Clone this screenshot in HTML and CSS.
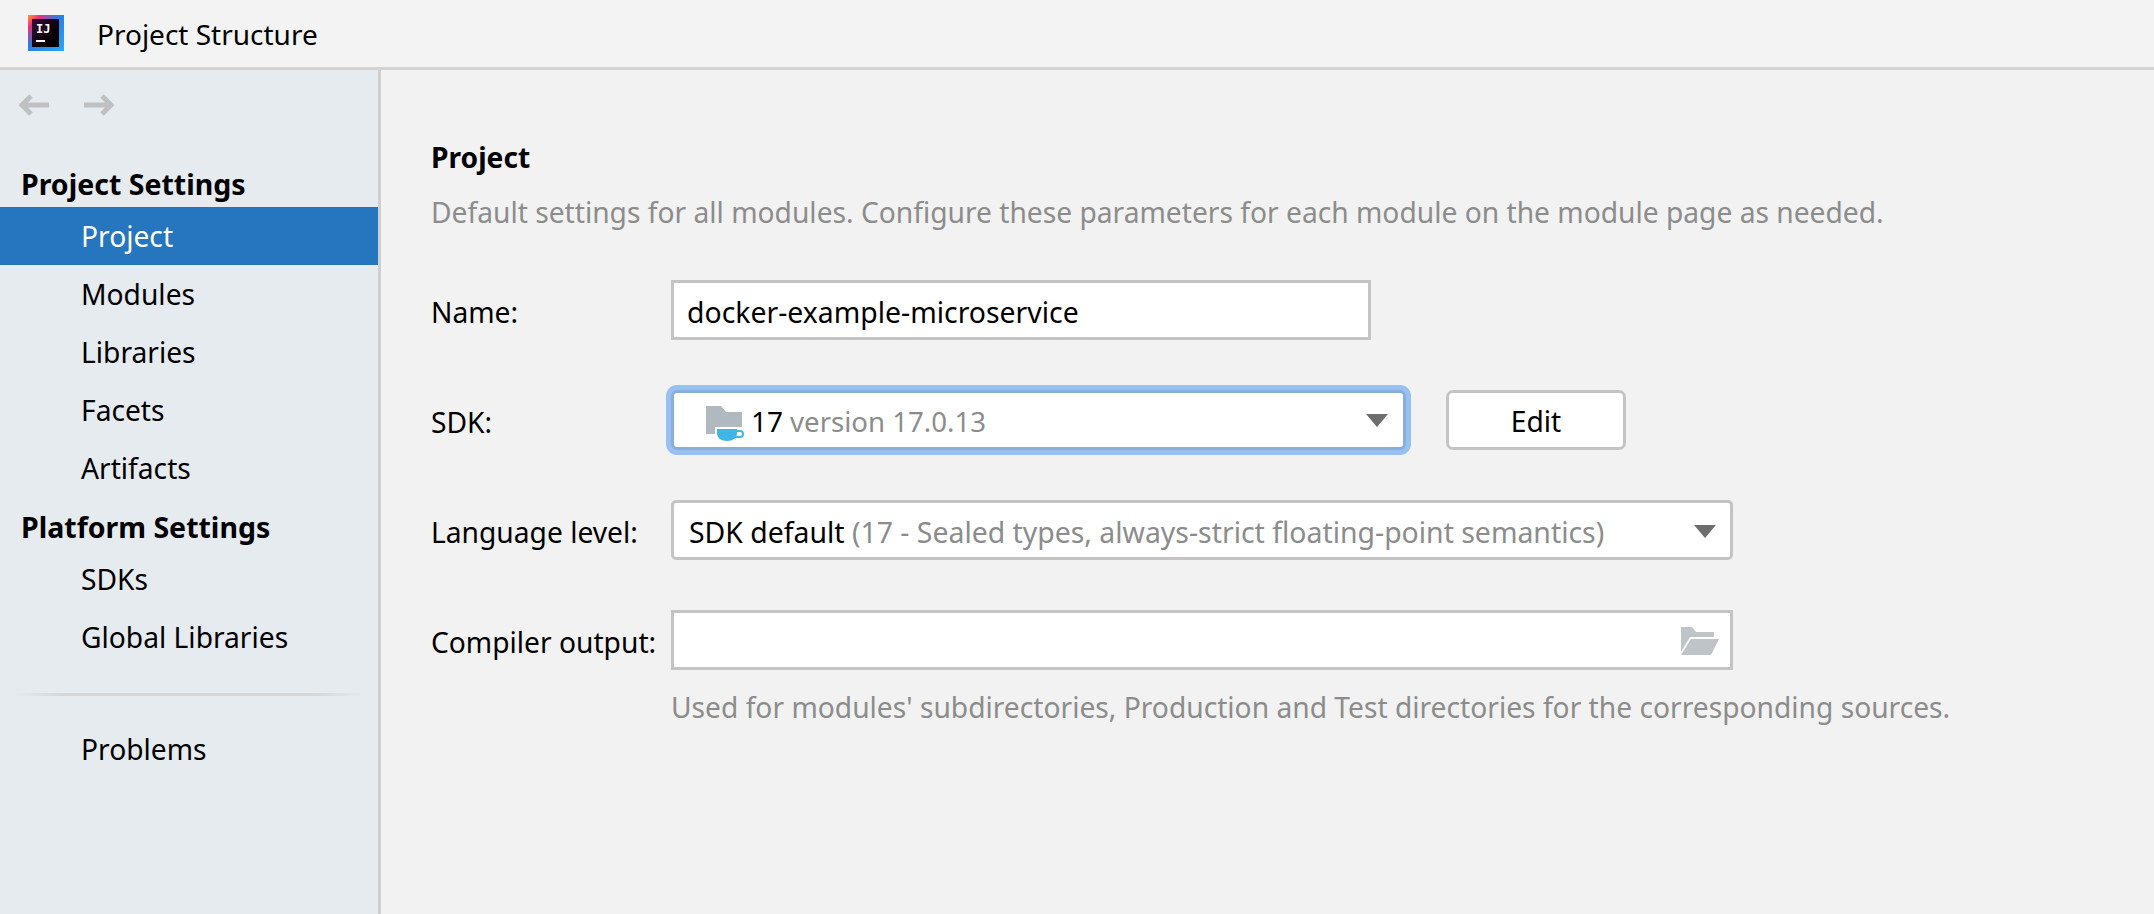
FILE: index.html
```html
<!DOCTYPE html>
<html>
<head>
    <title>Project Structure</title>
    <link rel="stylesheet" href="styles.css">
</head>
<body>
    <header class="titlebar">
        <svg class="logo" width="36" height="36" viewBox="0 0 36 36">
            <defs>
                <linearGradient id="logoGrad" x1="0" y1="0" x2="1" y2="1">
                    <stop offset="0" stop-color="#fca326"/>
                    <stop offset="0.18" stop-color="#ee2f7b"/>
                    <stop offset="0.45" stop-color="#2b7be6"/>
                    <stop offset="1" stop-color="#27a9f5"/>
                </linearGradient>
                <linearGradient id="logoInner" x1="0" y1="0" x2="1" y2="1">
                    <stop offset="0" stop-color="#3a0a3a"/>
                    <stop offset="0.6" stop-color="#0c0208"/>
                    <stop offset="1" stop-color="#000"/>
                </linearGradient>
            </defs>
            <rect width="36" height="36" fill="url(#logoGrad)"/>
            <rect x="4" y="4" width="27" height="28" fill="url(#logoInner)"/>
            <text x="8" y="18" class="logo-text">IJ</text>
            <rect x="8" y="25" width="9" height="2" fill="#fff"/>
        </svg>
        <span class="title">Project Structure</span>
    </header>
    <div class="layout">
        <aside class="sidebar">
            <div class="nav-arrows">
                <svg width="32" height="24" viewBox="0 0 32 24"><path d="M32 12H5M14 3l-9 9 9 9" fill="none" stroke="#c0c0c0" stroke-width="5"/></svg>
                <svg width="32" height="24" viewBox="0 0 32 24"><path d="M0 12h27M18 3l9 9-9 9" fill="none" stroke="#c0c0c0" stroke-width="5"/></svg>
            </div>
            <h3 class="side-head">Project Settings</h3>
            <a class="side-item selected">Project</a>
            <a class="side-item">Modules</a>
            <a class="side-item">Libraries</a>
            <a class="side-item">Facets</a>
            <a class="side-item">Artifacts</a>
            <h3 class="side-head second">Platform Settings</h3>
            <a class="side-item">SDKs</a>
            <a class="side-item">Global Libraries</a>
            <div class="side-sep"></div>
            <a class="side-item">Problems</a>
        </aside>
        <main class="content">
            <h2 class="page-title">Project</h2>
            <p class="hint page-desc">Default settings for all modules. Configure these parameters for each module on the module page as needed.</p>
            <div class="form">
                <label class="form-label">Name:</label>
                <div class="form-row">
                    <div class="field name-field">docker-example-microservice</div>
                </div>

                <label class="form-label">SDK:</label>
                <div class="form-row">
                    <div class="field combo sdk-combo">
                        <svg class="sdk-icon" width="39" height="36" viewBox="0 0 39 36">
                            <path d="M0 0h15l5 6h16v22H0z" fill="#b0b9bf"/>
                            <path d="M9 21h27v8H9z" fill="#fff"/>
                            <path d="M11 23h20v4c0 5-4 8-10 8s-10-3-10-8z" fill="#3fb6e6"/>
                            <path d="M31 25h3a3 3 0 0 1 0 6h-5" fill="none" stroke="#3fb6e6" stroke-width="2"/>
                        </svg>
                        <span>17</span> <span class="muted">version 17.0.13</span>
                        <span class="arrow"></span>
                    </div>
                    <button class="edit-btn">Edit</button>
                </div>

                <label class="form-label">Language level:</label>
                <div class="form-row">
                    <div class="field combo wide">
                        <span>SDK default</span>&nbsp;<span class="muted">(17 - Sealed types, always-strict floating-point semantics)</span>
                        <span class="arrow"></span>
                    </div>
                </div>

                <label class="form-label">Compiler output:</label>
                <div class="form-row">
                    <div class="field wide">
                        <svg class="folder" width="38" height="28" viewBox="0 0 38 28">
                            <path d="M0 0h11l4 5h18v5H9L0 25z" fill="#bfc4c8"/>
                            <path d="M10 12h28l-8 16H0z" fill="#bfc4c8"/>
                        </svg>
                    </div>
                </div>

                <div></div>
                <p class="hint output-hint">Used for modules' subdirectories, Production and Test directories for the corresponding sources.</p>
            </div>
        </main>
    </div>
</body>
</html>
```

FILE: styles.css
```css
* {
    box-sizing: border-box;
}
html, body {
    height: 100%;
}
body {
    margin: 0;
    display: flex;
    flex-direction: column;
    font-family: "Noto Sans", "Open Sans", Arial, sans-serif;
    font-size: 28.2px;
    color: #000;
    background-color: #f2f2f2;
    overflow: hidden;
}
.titlebar {
    height: 70px;
    flex: none;
    display: flex;
    align-items: center;
    padding-left: 28px;
    background-color: #f3f3f3;
    border-bottom: 3px solid #d2d2d2;
}
.logo {
    margin-top: -1px;
}
.logo-text {
    font-family: "DejaVu Sans Mono", monospace;
    font-size: 12px;
    font-weight: bold;
    fill: #fff;
}
.title {
    margin-left: 33px;
    font-size: 28px;
}
.layout {
    flex: 1;
    display: flex;
    min-height: 0;
}
.sidebar {
    width: 381px;
    flex: none;
    background-color: #e6ebf0;
    border-right: 3px solid #cfcfcf;
}
.nav-arrows {
    display: flex;
    gap: 35px;
    padding: 23px 0 0 17px;
    height: 93px;
}
.side-head {
    margin: 0;
    padding-left: 21px;
    height: 44px;
    line-height: 42px;
    font-size: 28.5px;
    font-weight: bold;
}
.side-head.second {
    margin-top: 9px;
}
.side-item {
    display: block;
    height: 58px;
    line-height: 58px;
    padding-left: 81px;
}
.side-item.selected {
    background-color: #2675bf;
    color: #fff;
}
.side-sep {
    height: 3px;
    margin: 27px 12px 24px;
    background: linear-gradient(to right, #e6ebf0, #d6d6d6 15%, #d6d6d6 85%, #e6ebf0);
}
.content {
    flex: 1;
    padding: 67px 0 0 50px;
    background-color: #f2f2f2;
}
.page-title {
    margin: 0;
    height: 42px;
    line-height: 40px;
    font-size: 28.2px;
    font-weight: bold;
}
.hint {
    margin: 0;
    color: #8c8c8c;
}
.page-desc {
    margin-top: 13px;
    height: 42px;
    line-height: 40px;
}
.form {
    margin-top: 46px;
    display: grid;
    grid-template-columns: 240px 1fr;
    row-gap: 50px;
    align-items: center;
}
.form-label {
    padding-top: 3px;
}
.form-row {
    display: flex;
    align-items: center;
    gap: 40px;
}
.field {
    position: relative;
    height: 60px;
    line-height: 58px;
    padding: 0 13px;
    font-size: 28.4px;
    background-color: #fff;
    border: 3px solid #c4c4c4;
    white-space: nowrap;
}
.name-field {
    width: 700px;
}
.combo {
    padding: 0 15px;
    border-radius: 5px;
}
.sdk-combo {
    width: 735px;
    display: flex;
    align-items: center;
    gap: 6px;
    padding: 2px 15px 0 32px;
    font-size: 28px;
    border-color: #8aaedb;
    box-shadow: 0 0 0 5px #97c1f0;
    border-radius: 6px;
}
.sdk-combo .muted {
    margin-left: 1px;
    font-size: 27.6px;
}
.sdk-icon {
    flex: none;
    margin-top: 5px;
}
.wide {
    width: 1062px;
}
.muted {
    color: #8c8c8c;
}
.arrow {
    position: absolute;
    right: 14px;
    top: 22px;
    width: 0;
    height: 0;
    border-left: 11px solid transparent;
    border-right: 11px solid transparent;
    border-top: 13px solid #6e6e6e;
}
.sdk-combo .arrow {
    right: 15px;
    top: 21px;
}
.edit-btn {
    width: 180px;
    height: 60px;
    padding: 2px 0 0;
    background-color: #fff;
    border: 3px solid #c4c4c4;
    border-radius: 7px;
    font: inherit;
    color: #000;
}
.folder {
    position: absolute;
    right: 11px;
    top: 14px;
}
.output-hint {
    margin-top: -34px;
    line-height: 42px;
}
```
